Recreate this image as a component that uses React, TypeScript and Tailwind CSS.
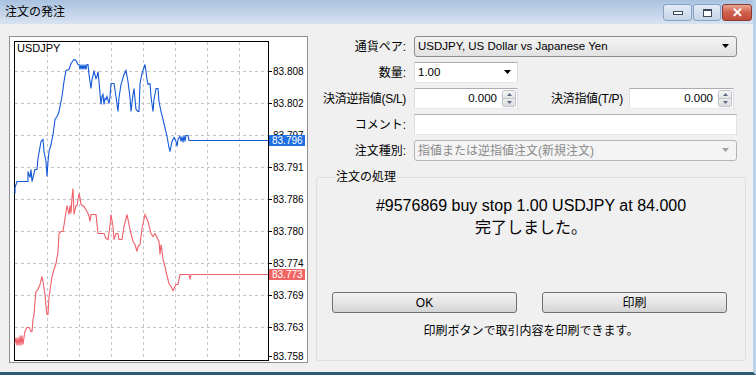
import React from 'react';

const bluePts = [[14,192],[14,186],[16,180],[27,180],[27,170],[29,176],[30,168],[31,180],[33,172],[34,168],[36,168],[37,157],[40,140],[42,138],[43,150],[45,160],[46,175],[47,160],[48,150],[50,143],[52,133],[54,118],[56,115],[57,113],[58,110],[61,95],[63,80],[65,69],[68,68],[70,62],[73,58],[75,59],[77,63],[78,63],[79,68],[80,63],[81,68],[82,63],[83,68],[84,63],[85,68],[86,63],[87,63],[88,73],[90,87],[91,78],[93,70],[95,77],[96,75],[97,70],[98,80],[99,92],[100,103],[101,95],[102,93],[103,103],[104,97],[105,98],[106,95],[108,102],[109,96],[110,82],[113,82],[115,95],[117,110],[118,96],[120,83],[123,73],[125,69],[127,80],[129,96],[130,110],[132,93],[133,87],[135,108],[137,110],[138,110],[139,82],[141,72],[144,63],[146,78],[147,83],[149,82],[150,95],[152,110],[153,98],[155,87],[157,87],[158,100],[160,110],[163,122],[166,135],[168,146],[169,150],[171,140],[173,136],[175,140],[176,145],[177,138],[179,135],[180,140],[181,135],[182,141],[183,134],[184,140],[185,134],[187,134],[188,139],[267,139]];

const redPts = [[14,342],[15,336],[16,344],[17,336],[18,344],[19,334],[20,344],[21,334],[22,343],[23,336],[24,330],[26,326],[28,326],[30,330],[31,330],[32,318],[33,313],[34,300],[35,290],[37,288],[39,283],[41,275],[42,280],[44,293],[45,305],[46,313],[47,313],[48,296],[50,282],[51,275],[53,268],[55,262],[57,250],[58,232],[60,230],[62,230],[64,217],[66,204],[68,213],[69,204],[70,212],[71,196],[72,187],[73,213],[75,204],[76,204],[78,192],[79,196],[80,203],[83,205],[86,210],[87,212],[88,215],[89,220],[90,213],[95,213],[97,232],[103,232],[105,237],[107,238],[109,224],[110,213],[112,225],[113,238],[115,232],[117,232],[118,238],[121,238],[123,225],[126,213],[128,223],[130,232],[132,240],[134,243],[136,250],[137,245],[139,243],[141,227],[144,213],[147,220],[150,232],[152,235],[154,232],[156,236],[158,240],[159,253],[160,243],[161,249],[162,258],[164,265],[165,270],[167,278],[168,282],[170,285],[172,289],[174,285],[175,283],[177,283],[179,273],[188,273],[189,278],[190,273],[267,273]];

const gridX = [46, 78, 110, 142, 174, 206, 238];
const gridY = [70, 102, 134, 166, 198, 230, 262, 294, 326];
const prices = ['83.808', '83.802', '83.797', '83.791', '83.786', '83.780', '83.774', '83.769', '83.763'];

const toPoints = (pts: number[][]) => pts.map(([x, y]) => `${x},${y + 0.5}`).join(' ');

function Chart() {
  return (
    <svg width="299" height="327" viewBox="9 36 299 327" className="block">
      <rect x="9" y="36" width="299" height="327" fill="#fff" />
      {gridX.map((x) => (
        <line key={x} x1={x + 0.5} y1="41" x2={x + 0.5} y2="359" stroke="#c4c4c4" strokeDasharray="3,3" />
      ))}
      {gridY.map((y) => (
        <line key={y} x1="14" y1={y + 0.5} x2="267" y2={y + 0.5} stroke="#c4c4c4" strokeDasharray="3,3" />
      ))}
      <rect x="13.5" y="40.5" width="254" height="319" fill="none" stroke="#000" />
      {gridY.map((y, i) => (
        <g key={y}>
          <line x1="267" y1={y + 0.5} x2="271" y2={y + 0.5} stroke="#000" />
          <text x="272" y={y + 4} fontSize="10" fill="#000" fontFamily="Liberation Sans, sans-serif">{prices[i]}</text>
        </g>
      ))}
      <line x1="267" y1="355.5" x2="271" y2="355.5" stroke="#000" />
      <text x="272" y="359" fontSize="10" fill="#000" fontFamily="Liberation Sans, sans-serif">83.758</text>
      <text x="16" y="51" fontSize="11" fill="#000" fontFamily="Liberation Sans, sans-serif">USDJPY</text>
      <polyline points={toPoints(redPts)} fill="none" stroke="#f0606a" strokeWidth="1.1" />
      <polyline points={toPoints(bluePts)} fill="none" stroke="#1458d8" strokeWidth="1.1" />
      <rect x="268" y="134" width="36" height="11" fill="#1f6fe0" />
      <text x="271" y="143" fontSize="10" fill="#fff" fontFamily="Liberation Sans, sans-serif">83.796</text>
      <rect x="268" y="268" width="36" height="11" fill="#f06464" />
      <text x="271" y="277" fontSize="10" fill="#fff" fontFamily="Liberation Sans, sans-serif">83.773</text>
    </svg>
  );
}

function Arrow({ gray }: { gray?: boolean }) {
  return (
    <svg width="8" height="5" viewBox="0 0 8 5">
      <path d="M0 0h7L3.5 4z" fill={gray ? '#a0a0a0' : '#000'} />
    </svg>
  );
}

function Spinner() {
  return (
    <div className="flex flex-col w-[14px] h-[17px] border border-[#c2c6cc] rounded-[2px] overflow-hidden">
      <div className="flex-1 flex items-center justify-center bg-gradient-to-b from-[#f5f5f5] to-[#e3e3e3] border-b border-[#c2c6cc]">
        <svg width="5" height="3" viewBox="0 0 5 3"><path d="M0 3h5L2.5 0z" fill="#5a6a80" /></svg>
      </div>
      <div className="flex-1 flex items-center justify-center bg-gradient-to-b from-[#ececec] to-[#dcdcdc]">
        <svg width="5" height="3" viewBox="0 0 5 3"><path d="M0 0h5L2.5 3z" fill="#5a6a80" /></svg>
      </div>
    </div>
  );
}

const inputBox = 'h-[21px] bg-white border border-t-[#abadb3] border-x-[#dbdfe6] border-b-[#e3e9ef]';
const winBtn = 'h-[21px] w-[185px] flex items-center justify-center rounded-[3px] border border-[#707070] bg-gradient-to-b from-[#f2f2f2] via-[#e6e6e6] to-[#d4d4d4] text-[12px]';

export default function App() {
  return (
    <div className="w-[756px] h-[375px] bg-[#f0f0f0] font-['Liberation_Sans','Noto_Sans_CJK_JP',sans-serif] text-black overflow-hidden border-r-[3px] border-r-[#b8d2ec] border-b-[3px] border-b-[#2c5a6e] flex flex-col">
      <div className="h-[24px] flex items-center justify-between pl-[5px] pr-[1px] bg-gradient-to-b from-[#a9c2e0] to-[#d8e3f0] shrink-0">
        <span className="text-[12px] leading-none">注文の発注</span>
        <div className="flex items-start gap-[1px] self-start pt-[4px]">
          <div className="w-[29px] h-[17px] rounded-[3px] border border-[#8aa2c0] bg-gradient-to-b from-[#e4ecf6] to-[#c4d4e8] flex items-center justify-center">
            <div className="w-[10px] h-[4px] border border-[#3c4a5e] bg-white" />
          </div>
          <div className="w-[28px] h-[17px] rounded-[3px] border border-[#8aa2c0] bg-gradient-to-b from-[#e4ecf6] to-[#c4d4e8] flex items-center justify-center">
            <div className="w-[9px] h-[8px] border border-[#3c4a5e] border-t-2 bg-white" />
          </div>
          <div className="w-[30px] h-[17px] rounded-[3px] border border-[#8a3a34] bg-gradient-to-b from-[#e8a493] via-[#d0604c] to-[#c24a38] flex items-center justify-center text-white text-[13px] font-bold leading-none">
            ✕
          </div>
        </div>
      </div>

      <div className="flex items-start pt-[12px] pl-[9px]">
        <div className="w-[299px] h-[327px] border border-[#8e8f8f] shrink-0 overflow-hidden">
          <Chart />
        </div>

        <div className="w-[430px] ml-[8px] flex flex-col text-[12px]">
          <div className="flex items-center gap-[8px] h-[21px]">
            <span className="w-[90px] text-right shrink-0">通貨ペア:</span>
            <div className="w-[323px] h-[21px] flex items-center justify-between pl-[3px] pr-[6px] rounded-[3px] border border-[#8c8c8c] bg-gradient-to-b from-[#f4f4f4] to-[#e2e2e2]">
              <span className="text-[11.5px]">USDJPY, US Dollar vs Japanese Yen</span>
              <Arrow />
            </div>
          </div>

          <div className="flex items-center gap-[8px] h-[21px] mt-[5px]">
            <span className="w-[90px] text-right shrink-0">数量:</span>
            <div className={`${inputBox} w-[104px] flex items-center justify-between pl-[3px] pr-[5px]`}>
              <span className="text-[11.5px]">1.00</span>
              <Arrow />
            </div>
          </div>

          <div className="flex items-center h-[21px] mt-[5px]">
            <span className="w-[90px] text-right shrink-0 tracking-[-0.3px]">決済逆指値(S/L)</span>
            <div className={`${inputBox} ml-[8px] w-[104px] flex items-center justify-end pr-[1px] gap-[5px]`}>
              <span className="text-[11.5px]">0.000</span>
              <Spinner />
            </div>
            <span className="ml-[33px] w-[78px] tracking-[-0.3px]">決済指値(T/P)</span>
            <div className={`${inputBox} w-[105px] flex items-center justify-end pr-[1px] gap-[5px]`}>
              <span className="text-[11.5px]">0.000</span>
              <Spinner />
            </div>
          </div>

          <div className="flex items-center gap-[8px] h-[21px] mt-[5px]">
            <span className="w-[90px] text-right shrink-0">コメント:</span>
            <div className={`${inputBox} w-[323px]`} />
          </div>

          <div className="flex items-center gap-[8px] h-[21px] mt-[5px]">
            <span className="w-[90px] text-right shrink-0">注文種別:</span>
            <div className="w-[323px] h-[21px] flex items-center justify-between pl-[3px] pr-[6px] rounded-[3px] border border-[#b5b5b5] bg-[#f4f4f4] text-[#8a8a8a]">
              <span>指値または逆指値注文(新規注文)</span>
              <Arrow gray />
            </div>
          </div>

          <fieldset className="mt-[9px] h-[191px] border border-[#d5dfe5] rounded-[3px] px-[15px] flex flex-col items-center">
            <legend className="ml-[3px] px-[1px] text-[12px] leading-[14px]">注文の処理</legend>
            <div className="mt-[11px] text-[16px] leading-[22px] text-center">
              <div>#9576869 buy stop 1.00 USDJPY at 84.000</div>
              <div>完了しました。</div>
            </div>
            <div className="mt-[53px] flex gap-[25px] -ml-[3px]">
              <button className={winBtn}>OK</button>
              <button className={winBtn}>印刷</button>
            </div>
            <div className="mt-[9px] text-[12px]">印刷ボタンで取引内容を印刷できます。</div>
          </fieldset>
        </div>
      </div>
    </div>
  );
}
